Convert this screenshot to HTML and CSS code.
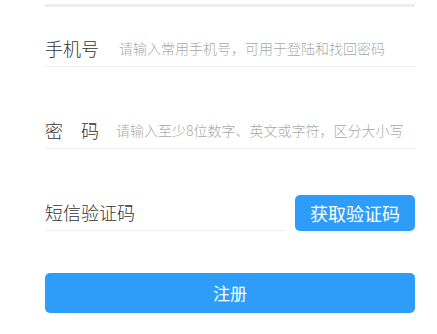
FILE: index.html
```html
<!DOCTYPE html>
<html lang="zh-CN">
<head>
<meta charset="UTF-8">
<meta name="viewport" content="width=device-width, initial-scale=1.0">
<title>注册</title>
<link rel="stylesheet" href="styles.css">
</head>
<body>

<div class="form">
<div class="top-bar"></div>

<div class="row">
<label class="label">手机号</label>
<input class="input" type="text" placeholder="请输入常用手机号，可用于登陆和找回密码">
</div>

<div class="row">
<label class="label">密　码</label>
<input class="input input-pwd" type="password" placeholder="请输入至少8位数字、英文或字符，区分大小写">
</div>

<div class="row-code">
<div class="row code">
<input class="input input-code" type="text" placeholder="短信验证码">
</div>
<button class="btn btn-code" type="button">获取验证码</button>
</div>

<button class="btn btn-submit" type="button">注册</button>
</div>

</body>
</html>
```

FILE: styles.css
```css
html, body {
  margin: 0;
  padding: 0;
  background: #fff;
}
body {
  font-family: 'Noto Sans CJK SC', 'Noto Sans', sans-serif;
  color: #333;
}
div.form {  /* 表单整体 */
  width: 370px;
  padding: 4px 0 0 45px;
  display: flex;
  flex-direction: column;
}
div.top-bar {
  height: 3px;
  background: #eeeeee;
  margin-bottom: 23px;
}
div.row {  /* 一行输入 */
  display: flex;
  align-items: center;
  height: 36px;
  border-bottom: 1px solid #eeeeee;
  margin-bottom: 45px;
}
label.label {
  font-size: 18px;
  font-weight: 300;
  line-height: 36px;
  color: #333;
  white-space: nowrap;
  width: 74px;
  flex-shrink: 0;
}
input.input {
  flex: 1;
  min-width: 0;
  border: none;
  outline: none;
  padding: 0;
  font-family: inherit;
  font-size: 14px;
  font-weight: 300;
  color: #333;
  background: transparent;
}
input.input::placeholder {
  color: #aaaaaa;
}
input.input-pwd {
  margin-left: -3px;
}
div.row-code {
  display: flex;
  align-items: flex-start;
  gap: 10px;
  margin-bottom: 42px;
}
div.row-code > div.code {
  width: 240px;
  margin-bottom: 0;
}
input.input-code {
  font-size: 18px;
}
input.input-code::placeholder {
  color: #333;
}
button.btn {  /* 蓝色按钮 */
  border: none;
  border-radius: 5px;
  background: #2d9df9;
  color: #fff;
  font-family: inherit;
  padding: 0;
  cursor: pointer;
}
button.btn-code {
  width: 120px;
  height: 36px;
  margin-top: 1px;
  font-size: 18px;
}
button.btn-submit {
  width: 370px;
  height: 40px;
  font-size: 17px;
  padding-bottom: 2px;
}
```
